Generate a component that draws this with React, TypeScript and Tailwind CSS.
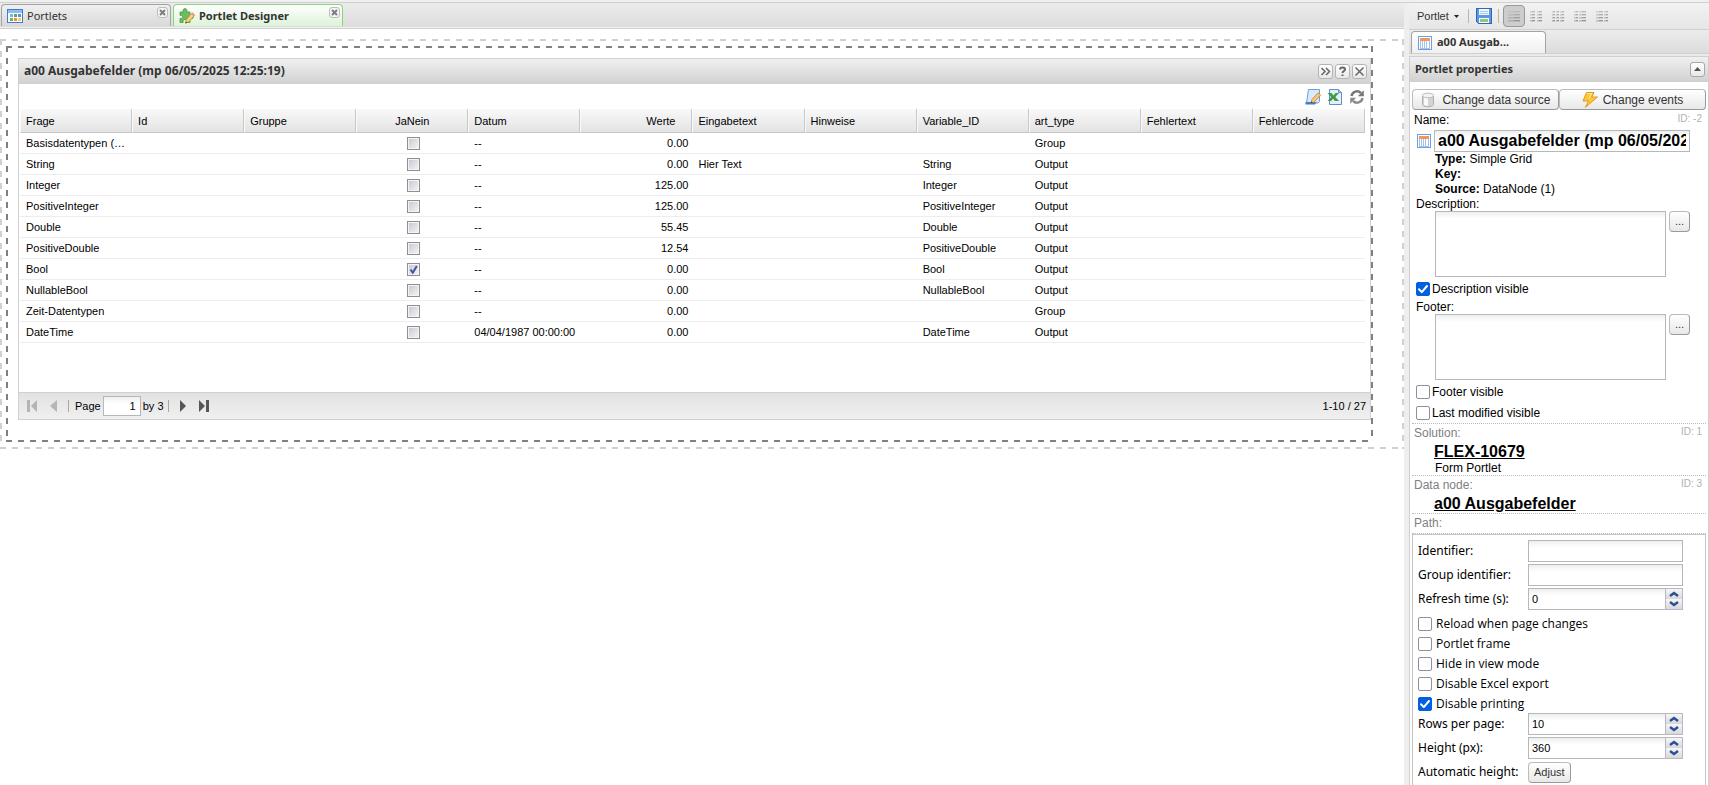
import type { ReactNode } from "react";

const arial = "font-['Liberation_Sans',Arial,sans-serif]";
const tahoma = "font-['Noto_Sans',Tahoma,sans-serif]";

const columns = [
  "Frage", "Id", "Gruppe", "JaNein", "Datum", "Werte",
  "Eingabetext", "Hinweise", "Variable_ID", "art_type", "Fehlertext", "Fehlercode",
];

type Row = {
  frage: string;
  checked?: boolean;
  datum?: string;
  werte: string;
  text?: string;
  variable?: string;
  type?: string;
};

const rows: Row[] = [
  { frage: "Basisdatentypen (…", werte: "0.00", type: "Group" },
  { frage: "String", werte: "0.00", text: "Hier Text", variable: "String", type: "Output" },
  { frage: "Integer", werte: "125.00", variable: "Integer", type: "Output" },
  { frage: "PositiveInteger", werte: "125.00", variable: "PositiveInteger", type: "Output" },
  { frage: "Double", werte: "55.45", variable: "Double", type: "Output" },
  { frage: "PositiveDouble", werte: "12.54", variable: "PositiveDouble", type: "Output" },
  { frage: "Bool", checked: true, werte: "0.00", variable: "Bool", type: "Output" },
  { frage: "NullableBool", werte: "0.00", variable: "NullableBool", type: "Output" },
  { frage: "Zeit-Datentypen", werte: "0.00", type: "Group" },
  { frage: "DateTime", datum: "04/04/1987 00:00:00", werte: "0.00", variable: "DateTime", type: "Output" },
];

function PortletsIcon() {
  return (
    <svg width="16" height="16" viewBox="0 0 16 16" shapeRendering="crispEdges">
      <rect x="0.5" y="1.5" width="15" height="13" fill="#fff" stroke="#3f7fc8" />
      <rect x="1" y="2" width="14" height="3" fill="#8cbcf0" />
      <rect x="3" y="6" width="3" height="3" fill="#6fb6e8" />
      <rect x="7" y="6" width="3" height="3" fill="#5fa85a" />
      <rect x="11" y="6" width="3" height="3" fill="#5b8fd8" />
      <rect x="3" y="10" width="3" height="3" fill="#6db35f" />
      <rect x="7" y="10" width="3" height="3" fill="#f08a45" />
      <rect x="11" y="10" width="3" height="3" fill="#f3cf62" />
    </svg>
  );
}

function DesignerIcon() {
  return (
    <svg width="16" height="16" viewBox="0 0 16 16">
      <path d="M1 4h3.200C3.400 2 4.600.6 6 .6S8.600 2 7.800 4H11v3c2-.8 3.500.3 3.500 1.700S13 11.200 11 10.400V14.500H7.800c.6-2-.4-3-1.800-3s-2.400 1-1.800 3H1v-4c1.800.4 2.600-.5 2.600-1.600S2.800 7 1 7.400z" fill="#6dbb62" stroke="#4a9a45" strokeWidth=".8" />
      <path d="M6.500 15.300l.8-3.600L13 4.800l2.600 2.300-5.600 6.700z" fill="#fbd27a" stroke="#c08a3c" strokeWidth=".8" />
      <path d="M12.600 5.200l2.700 2.300" stroke="#eb9a80" strokeWidth="1.800" />
      <path d="M6.500 15.300l.5-1.900 1.300 1.100z" fill="#333" />
    </svg>
  );
}

function GridIcon() {
  return (
    <svg width="14" height="14" viewBox="0 0 14 14" shapeRendering="crispEdges" className="shrink-0">
      <rect x="0.5" y="0.5" width="13" height="13" fill="#fff" stroke="#6f9fdc" />
      <rect x="2" y="2" width="10" height="3" fill="#f2965c" />
      <path d="M2.500 5v7M4.500 5v7M6.500 5v7M8.500 5v7M11.500 5v7" stroke="#a0c2ec" />
      <path d="M2 12.500h10" stroke="#a0c2ec" />
    </svg>
  );
}

function EditIcon() {
  return (
    <svg width="16" height="16" viewBox="0 0 16 16">
      <path d="M3.500.5h11v12l-1.500 1.500H1.500z" fill="#d9eafc" stroke="#6a9fdc" />
      <path d="M.5 13h11l-1.500 2.500H.5z" fill="#3f7ecb" />
      <path d="M6 14l1-3.600 6-6.600 2.600 2.300-6 6.700z" fill="#fbc673" stroke="#c08a40" strokeWidth=".8" />
      <path d="M6 14l.5-1.700 1.200 1.100z" fill="#222" />
    </svg>
  );
}

function ExcelIcon() {
  return (
    <svg width="16" height="16" viewBox="0 0 16 16">
      <path d="M2.500.5h9l3 3v12h-12z" fill="#e3effc" stroke="#5b8fd0" />
      <path d="M11.500.5v3h3" fill="#a9caf0" stroke="#5b8fd0" />
      <path d="M.5 4h4l2 2.400L8.500 4H12L8.300 8l3.700 4H8l-2-2.300L4 12H.5l3.700-4z" fill="#3f9a42" />
    </svg>
  );
}

function RefreshIcon() {
  return (
    <svg width="16" height="16" viewBox="0 0 16 16">
      <path d="M2.500 7A5.500 5.500 0 0 1 12 4.200" fill="none" stroke="#777" strokeWidth="2.500" />
      <path d="M14.800 1.200v6H8.800z" fill="#777" />
      <path d="M13.500 9A5.500 5.500 0 0 1 4 11.800" fill="none" stroke="#8d8d8d" strokeWidth="2.500" />
      <path d="M1.200 14.800v-6h6z" fill="#8d8d8d" />
    </svg>
  );
}

function SaveIcon() {
  return (
    <svg width="16" height="16" viewBox="0 0 16 16" shapeRendering="crispEdges">
      <path d="M.5.500h15v15h-13l-2-2z" fill="#5c97e4" stroke="#2f68b8" />
      <rect x="3" y="1" width="10" height="6" fill="#f2f8fe" />
      <rect x="4" y="3" width="8" height="1" fill="#a9c8ec" />
      <rect x="4" y="5" width="8" height="1" fill="#a9c8ec" />
      <rect x="3" y="10" width="10" height="5" fill="#fff" />
      <rect x="4" y="11" width="8" height="3" fill="#8ccb78" />
    </svg>
  );
}

// Each column fades in from its left edge, lower lines are darker.
function LayoutIcon({ cols }: { cols: number[][] }) {
  return (
    <svg width="12" height="12" viewBox="0 0 12 12" shapeRendering="crispEdges">
      {cols.map(([x, w]) =>
        [0, 1, 2, 3].map((i) => (
          <g key={x + "-" + i} fill={["#b8b8b8", "#acacac", "#a0a0a0", "#949494"][i]}>
            <rect x={x} y={i * 3 + 1} width={w} height="1" opacity=".5" />
            <rect x={x + Math.floor(w / 2)} y={i * 3 + 1} width={w - Math.floor(w / 2)} height="1" />
            <rect x={x} y={i * 3 + 2} width={w} height="1" opacity=".35" />
          </g>
        ))
      )}
    </svg>
  );
}

function DatabaseIcon() {
  return (
    <svg width="16" height="16" viewBox="0 0 16 16">
      <path d="M2.500 3.500v9c0 3 11 3 11 0v-9" fill="#d4d4d4" stroke="#b0b0b0" />
      <path d="M4 4v9l4 1V4z" fill="#fafafa" />
      <ellipse cx="8" cy="3.500" rx="5.500" ry="2.300" fill="#f4f4f4" stroke="#bcbcbc" />
    </svg>
  );
}

function BoltIcon() {
  return (
    <svg width="16" height="16" viewBox="0 0 16 16">
      <path d="M4.500.5H12L9.800 5h5.700L3.500 15.200 6.500 9H1z" fill="#fbc637" stroke="#dd9a25" />
      <path d="M5.200 1.500h4.500L7 6" fill="none" stroke="#fdeaa0" />
    </svg>
  );
}

function TabClose({ label }: { label: string }) {
  return (
    <button aria-label={label} className="mt-px flex h-[11px] w-[11px] items-center justify-center self-start rounded-[3px] border border-[#bdbdbd] bg-[#f4f4f4]">
      <svg width="7" height="7" viewBox="0 0 7 7">
        <path d="M1 1l5 5M6 1L1 6" stroke="#7d7d7d" strokeWidth="2" />
      </svg>
    </button>
  );
}

function ToolButton({ label, children }: { label: string; children: ReactNode }) {
  return (
    <button aria-label={label} className="flex h-[15px] w-[15px] items-center justify-center rounded-[3px] border border-[#b4b4b4] bg-linear-to-b from-white to-[#e8e8e8]">
      <svg width="11" height="11" viewBox="0 0 11 11" fill="none" stroke="#666" strokeWidth="1.500">
        {children}
      </svg>
    </button>
  );
}

function GridCheckbox({ label, checked }: { label: string; checked?: boolean }) {
  return (
    <span className="grid h-[13px] w-[13px]">
      <input
        type="checkbox"
        aria-label={label}
        defaultChecked={checked}
        className="peer col-start-1 row-start-1 h-[13px] w-[13px] appearance-none border border-[#8e8f8f] bg-linear-to-br from-[#c3c8d0] to-[#f6f6f6] shadow-[inset_0_0_0_1px_#f4f4f4]"
      />
      <svg viewBox="0 0 13 13" className="pointer-events-none invisible col-start-1 row-start-1 peer-checked:visible">
        <path d="M3.500 6.500l2.300 3.200L9.800 3" fill="none" stroke="#3f57a0" strokeWidth="2" />
      </svg>
    </span>
  );
}

function Checkbox({ label, checked, className = "" }: { label: string; checked?: boolean; className?: string }) {
  return (
    <label className={"flex items-center " + className}>
      <span className="grid h-[14px] w-[14px] shrink-0">
        <input
          type="checkbox"
          defaultChecked={checked}
          className="peer col-start-1 row-start-1 h-[14px] w-[14px] appearance-none rounded-[2px] border border-[#8f8f9d] bg-white checked:border-[#0060df] checked:bg-[#0060df]"
        />
        <svg viewBox="0 0 14 14" className="pointer-events-none invisible col-start-1 row-start-1 peer-checked:visible">
          <path d="M3 7.300l2.800 2.800L11 4" fill="none" stroke="#fff" strokeWidth="2" strokeLinecap="round" strokeLinejoin="round" />
        </svg>
      </span>
      <span>{label}</span>
    </label>
  );
}

const field = "border border-[#b5b8b8] bg-white bg-linear-to-b from-[#edf0ef] via-white via-[7px] to-white outline-none";

function FieldRow({ id, label, children }: { id?: string; label: string; children: ReactNode }) {
  return (
    <div className="flex h-6 items-center">
      <label htmlFor={id} className="w-[110px] shrink-0">{label}</label>
      {children}
    </div>
  );
}

function Spinner({ id, value }: { id: string; value: string }) {
  return (
    <span className="flex h-[22px] min-w-0 flex-1">
      <input id={id} defaultValue={value} className={field + " min-w-0 flex-1 border-r-0 px-[3px] text-[11px] " + arial} />
      <span className="flex w-[18px] flex-col border border-[#b7b7c9]">
        {["M1 5l4-3 4 3", "M1 1l4 3 4-3"].map((d, i) => (
          <button key={d} aria-label={i ? "Decrease" : "Increase"} className="flex flex-1 items-center justify-center bg-linear-to-b from-[#f6f6f6] to-[#d8d8d8]">
            <svg width="10" height="6" viewBox="0 0 10 6">
              <path d={d} fill="none" stroke="#2d4f94" strokeWidth="2.500" />
            </svg>
          </button>
        ))}
      </span>
    </span>
  );
}

const softButton = "rounded-[4px] border border-[#bbb] border-r-[#999] border-b-[#999] bg-linear-to-b from-white to-[#e8e8e8] text-[#333]";

function TextBlock({ label, id }: { label: string; id: string }) {
  return (
    <div className="pl-1">
      <label htmlFor={id} className="block leading-[14px]">{label}</label>
      <div className="flex items-start gap-[3px] pr-4 pl-[19px]">
        <textarea id={id} className={field + " h-[66px] min-w-0 flex-1 resize-none"} />
        <button aria-label={"Edit " + label} className={softButton + " h-[21px] w-[21px] text-[11px]"}>...</button>
      </div>
    </div>
  );
}

function LinkBlock({ label, id, name, note }: { label: string; id: string; name: string; note?: string }) {
  return (
    <div className="border-t border-dotted border-[#bbb] px-[2px]">
      <div className="flex justify-between text-[#808080]">
        <span className="leading-[19px]">{label}</span>
        <span className="pr-[2px] text-[10px] leading-[16px] text-[#b0b0b0]">{id}</span>
      </div>
      <div className="pl-5">
        <a href="#" className="block text-[16px] leading-[18px] font-bold underline">{name}</a>
        {note && <div className="pl-[1px] leading-[14px]">{note}</div>}
      </div>
    </div>
  );
}

function Designer() {
  return (
    <main className="flex min-w-0 flex-1 flex-col">
      <nav className={"flex h-6 items-start gap-[2px] bg-linear-to-b from-[#ececec] to-[#dcdcdc] pt-[1px] pl-[1px] text-[11px] " + tahoma}>
        <div className="flex h-[22px] w-[170px] items-center rounded-t-[4px] border border-b-0 border-[#a3a3a3] bg-linear-to-b from-[#f0f0f0] to-[#d9d9d9] pt-[1px] pr-[2px] pl-[5px]">
          <button className="flex flex-1 items-center gap-1 text-[#333]"><PortletsIcon />Portlets</button>
          <TabClose label="Close Portlets" />
        </div>
        <div className="flex h-[22px] w-[170px] items-center rounded-t-[4px] border border-b-0 border-[#8ad67c] bg-linear-to-b from-white to-[#dcf3d8] pt-[1px] pr-[2px] pl-[5px]">
          <button className="flex flex-1 items-center gap-1 font-bold text-[#333]"><DesignerIcon />Portlet Designer</button>
          <TabClose label="Close Portlet Designer" />
        </div>
      </nav>
      <div className="h-[2px] border-b border-[#d0d0d0] bg-[#f0f0f0]" />

      <div className="mt-[10px] bg-[image:repeating-linear-gradient(90deg,#d0d0d0_0_6px,transparent_6px_12px),repeating-linear-gradient(90deg,#d0d0d0_0_6px,transparent_6px_12px),repeating-linear-gradient(180deg,#d0d0d0_0_6px,transparent_6px_12px),repeating-linear-gradient(180deg,#d0d0d0_0_6px,transparent_6px_12px)] bg-[position:0_0,0_100%,0_0,100%_0] bg-[size:100%_2px,100%_2px,2px_100%,2px_100%] bg-no-repeat py-[7px] pr-[31px] pl-[6px]">
        <div className="bg-[image:repeating-linear-gradient(90deg,#808080_0_6px,transparent_6px_12px),repeating-linear-gradient(90deg,#808080_0_6px,transparent_6px_12px),repeating-linear-gradient(180deg,#808080_0_6px,transparent_6px_12px),repeating-linear-gradient(180deg,#808080_0_6px,transparent_6px_12px)] bg-[position:0_0,0_100%,0_0,100%_0] bg-[size:100%_2px,100%_2px,2px_100%,2px_100%] bg-no-repeat pt-3 pr-[2px] pb-[22px] pl-3">
          <section className="border border-[#d0d0d0]">
            <header className="flex h-[25px] items-center gap-[2px] border-b border-[#d0d0d0] bg-linear-to-b from-[#f0f0f0] to-[#d2d2d2] pr-[3px] pl-[5px]">
              <h1 className={"flex-1 text-[12px] font-bold text-[#333] " + tahoma}>a00 Ausgabefelder (mp 06/05/2025 12:25:19)</h1>
              <ToolButton label="More"><path d="M1.500 2l3.500 3.500L1.500 9M6 2l3.500 3.500L6 9" /></ToolButton>
              <ToolButton label="Help"><path d="M3 3.500C3 .8 8 .8 8 3.500 8 5 5.500 5 5.500 7M5.500 8.500v1.500" strokeWidth="2" /></ToolButton>
              <ToolButton label="Close"><path d="M1.500 1.500l8 8M9.500 1.500l-8 8" /></ToolButton>
            </header>
            <div className="flex h-[25px] items-center justify-end gap-[6px] pr-[5px]">
              <button aria-label="Edit"><EditIcon /></button>
              <button aria-label="Export to Excel"><ExcelIcon /></button>
              <button aria-label="Refresh"><RefreshIcon /></button>
            </div>
            <div className="h-[283px] pr-[5px] pl-[1px]">
              <table className="w-full table-fixed border-separate border-spacing-0 text-[11px]">
                <thead>
                  <tr className="h-6">
                    {columns.map((c) => (
                      <th
                        key={c}
                        className={
                          "border-r border-b border-l border-r-[#c8c8c8] border-b-[#c5c5c5] border-l-[#fafafa] bg-linear-to-b from-[#f9f9f9] to-[#e3e3e4] pt-[3px] pb-px font-normal " +
                          (c === "JaNein" ? "px-[5px] text-center" : c === "Werte" ? "pr-4 text-right" : "px-[5px] text-left")
                        }
                      >
                        {c}
                      </th>
                    ))}
                  </tr>
                </thead>
                <tbody className="[&_td]:border-b [&_td]:border-[#ededed] [&_td]:py-0 [&_td]:pr-1 [&_td]:pl-[6px]">
                  {rows.map((r) => (
                    <tr key={r.frage} className="h-[21px]">
                      <td className="whitespace-nowrap">{r.frage}</td>
                      <td />
                      <td />
                      <td><div className="flex justify-center"><GridCheckbox label={"JaNein " + r.frage} checked={r.checked} /></div></td>
                      <td className="whitespace-nowrap">{r.datum ?? "--"}</td>
                      <td className="text-right">{r.werte}</td>
                      <td>{r.text}</td>
                      <td />
                      <td>{r.variable}</td>
                      <td>{r.type}</td>
                      <td />
                      <td />
                    </tr>
                  ))}
                </tbody>
              </table>
            </div>
            <footer className="flex h-[27px] items-center border-t border-[#d0d0d0] bg-linear-to-b from-[#e2e2e2] to-[#f0f0f0] pr-1 pl-[6px] text-[11px]">
              <button aria-label="First page" className="w-[22px]">
                <svg width="14" height="12" viewBox="0 0 14 12"><path d="M2 0h3v12H2zM12 0v12L6 6z" fill="#b5b5b5" /></svg>
              </button>
              <button aria-label="Previous page" className="w-[21px]">
                <svg width="14" height="12" viewBox="0 0 14 12"><path d="M10 0v12L3 6z" fill="#b5b5b5" /></svg>
              </button>
              <span className="mr-[6px] h-3 border-l border-[#aca899]" />
              <label htmlFor="page" className="mr-[2px]">Page</label>
              <input id="page" defaultValue="1" className={field + " mr-[2px] h-5 w-[38px] px-1 text-right"} />
              <span>by 3</span>
              <span className="mx-1 h-3 border-l border-[#aca899]" />
              <button aria-label="Next page" className="w-[21px] pl-[7px]">
                <svg width="7" height="12" viewBox="0 0 7 12"><path d="M0 0v12l6-6z" fill="#555" /></svg>
              </button>
              <button aria-label="Last page" className="w-[22px] pl-[5px]">
                <svg width="12" height="12" viewBox="0 0 12 12"><path d="M0 0v12l6-6zM7 0h3v12H7z" fill="#555" /></svg>
              </button>
              <span className="ml-auto">1-10 / 27</span>
            </footer>
          </section>
        </div>
      </div>
    </main>
  );
}

function Properties() {
  return (
    <aside className="flex w-[305px] shrink-0 flex-col border-l-[5px] border-[#eee]">
      <div className="flex h-[26px] items-center bg-linear-to-b from-[#f2f2f2] to-[#e6e6e6] pl-2 text-[11px] text-[#333]">
        <button className="flex items-center gap-[5px]">
          Portlet
          <svg width="5" height="3" viewBox="0 0 5 3"><path d="M0 0h5L2.500 3z" fill="#222" /></svg>
        </button>
        <span className="mr-[7px] ml-[9px] h-[14px] border-l border-[#bab7a8]" />
        <button aria-label="Save"><SaveIcon /></button>
        <span className="mr-1 ml-[6px] h-[14px] border-l border-[#bab7a8]" />
        <button aria-label="One column" className="flex h-[22px] w-[22px] items-center justify-center rounded-[4px] border border-[#999] bg-[#cdcdcd]">
          <LayoutIcon cols={[[0, 12]]} />
        </button>
        <div className="flex gap-[10px] pl-[5px]">
          <button aria-label="Two columns"><LayoutIcon cols={[[0, 5], [7, 5]]} /></button>
          <button aria-label="Three columns"><LayoutIcon cols={[[0, 3], [4, 3], [8, 4]]} /></button>
          <button aria-label="Wide right column"><LayoutIcon cols={[[0, 4], [5, 7]]} /></button>
          <button aria-label="Wide left column"><LayoutIcon cols={[[0, 7], [8, 4]]} /></button>
        </div>
      </div>
      <div className={"flex h-6 items-end border-t border-[#d0d0d0] bg-linear-to-b from-[#ececec] to-[#dcdcdc] pl-[2px] " + tahoma}>
        <button className="flex h-[22px] w-[135px] items-center gap-[5px] rounded-t-[4px] border border-b-0 border-[#a3a3a3] bg-linear-to-b from-white to-[#f0f0f0] pl-[6px] text-[11px] font-bold text-[#333]">
          <GridIcon />
          a00 Ausgab...
        </button>
      </div>
      <div className="h-1 shrink-0 border-y border-[#d0d0d0] bg-[#eaeaea]" />
      <section className="flex-1 border-x border-[#d0d0d0]">
        <header className="flex h-[25px] items-center justify-between border-b border-[#d0d0d0] bg-linear-to-b from-[#f0f0f0] to-[#d2d2d2] pr-[3px] pl-[5px]">
          <h2 className={"text-[11px] font-bold text-[#333] " + tahoma}>Portlet properties</h2>
          <button aria-label="Collapse" className="flex h-[15px] w-[15px] items-center justify-center rounded-[3px] border border-[#a8a8a8] bg-linear-to-b from-white to-[#e8e8e8]">
            <svg width="7" height="4" viewBox="0 0 7 4"><path d="M0 4h7L3.500 0z" fill="#555" /></svg>
          </button>
        </header>
        <div className="px-[2px] pt-[7px] text-[12px]">
          <div className="flex">
            <button className={softButton + " flex h-[21px] flex-1 items-center justify-center gap-[6px]"}><DatabaseIcon />Change data source</button>
            <button className={softButton + " flex h-[21px] flex-1 items-center justify-center gap-[5px]"}><BoltIcon />Change events</button>
          </div>
          <div className="flex justify-between px-[2px]">
            <label htmlFor="name" className="leading-[20px]">Name:</label>
            <span className="pr-[2px] text-[10px] leading-[18px] text-[#b0b0b0]">ID: -2</span>
          </div>
          <div className="flex items-center gap-[3px] pr-4 pl-[5px]">
            <GridIcon />
            <input id="name" defaultValue="a00 Ausgabefelder (mp 06/05/2025 12:25:19)" className={field + " h-[22px] min-w-0 flex-1 px-[3px] text-[16px] font-bold"} />
          </div>
          <div className="pl-[23px] leading-[15px]">
            <div><b>Type:</b> Simple Grid</div>
            <div><b>Key:</b></div>
            <div><b>Source:</b> DataNode (1)</div>
          </div>
          <TextBlock id="description" label="Description:" />
          <Checkbox label="Description visible" checked className="h-[23px] gap-[2px] pl-1" />
          <TextBlock id="footer" label="Footer:" />
          <Checkbox label="Footer visible" className="mt-px h-[21px] gap-[2px] pl-1" />
          <Checkbox label="Last modified visible" className="h-[21px] gap-[2px] pl-1" />
          <LinkBlock label="Solution:" id="ID: 1" name="FLEX-10679" note="Form Portlet" />
          <LinkBlock label="Data node:" id="ID: 3" name="a00 Ausgabefelder" />
          <div className="border-y border-dotted border-[#bbb] px-[2px] leading-[19px] text-[#808080]">Path:</div>
          <div className={"border border-[#c5c5c5] pt-1 pr-[22px] pb-px pl-[5px] " + tahoma}>
            <FieldRow id="identifier" label="Identifier:"><input id="identifier" className={field + " h-[22px] min-w-0 flex-1 px-1 text-[11px]"} /></FieldRow>
            <FieldRow id="group" label="Group identifier:"><input id="group" className={field + " h-[22px] min-w-0 flex-1 px-1 text-[11px]"} /></FieldRow>
            <FieldRow id="refresh" label="Refresh time (s):"><Spinner id="refresh" value="0" /></FieldRow>
            <div className="-mb-[2px] pt-[3px] font-['Open_Sans',Tahoma,sans-serif] [&>label]:h-5 [&>label]:gap-1">
              <Checkbox label="Reload when page changes" />
              <Checkbox label="Portlet frame" />
              <Checkbox label="Hide in view mode" />
              <Checkbox label="Disable Excel export" />
              <Checkbox label="Disable printing" checked />
            </div>
            <FieldRow id="rows" label="Rows per page:"><Spinner id="rows" value="10" /></FieldRow>
            <FieldRow id="height" label="Height (px):"><Spinner id="height" value="360" /></FieldRow>
            <FieldRow label="Automatic height:"><button className={softButton + " h-[21px] px-[5px] text-[11px] " + arial}>Adjust</button></FieldRow>
          </div>
        </div>
      </section>
    </aside>
  );
}

export default function App() {
  return (
    <div className={"flex min-h-screen flex-col bg-white text-black " + arial}>
      <div className="h-[3px] border-b border-[#d0d0d0] bg-[#f0f0f0]" />
      <div className="flex flex-1">
        <Designer />
        <Properties />
      </div>
    </div>
  );
}
